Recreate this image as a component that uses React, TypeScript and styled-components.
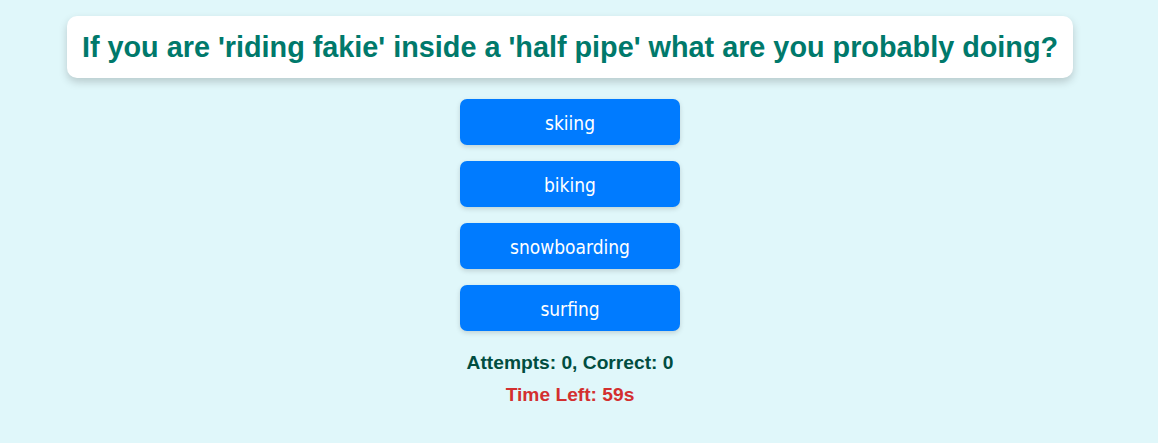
import React from "react";
import styled, { createGlobalStyle } from "styled-components";

const Global = createGlobalStyle`
  html, body {
    margin: 0;
    padding: 0;
    background: #e0f7fa;
  }
  body {
    font-family: "Liberation Sans", Arial, sans-serif;
  }
`;

const Page = styled.div`
  width: 1140px;
  display: flex;
  flex-direction: column;
  align-items: center;
  padding-top: 16px;
`;

const QuestionCard = styled.h2`
  margin: 0;
  background: #ffffff;
  border-radius: 10px;
  box-shadow: 0 4px 8px rgba(0, 0, 0, 0.18);
  padding: 15px 15px;
  color: #00796b;
  font-size: 28.8px;
  font-weight: bold;
  line-height: 32px;
  text-align: center;
  white-space: nowrap;
`;

const Options = styled.div`
  display: flex;
  flex-direction: column;
  gap: 16px;
  margin-top: 21px;
`;

const OptionButton = styled.button`
  width: 220px;
  height: 46px;
  border: none;
  border-radius: 7px;
  background: #007bff;
  color: #ffffff;
  font-family: "DejaVu Sans Condensed", "DejaVu Sans", Verdana, sans-serif;
  font-stretch: condensed;
  font-size: 19px;
  padding: 2px 0 0;
  box-shadow: 0 2px 5px rgba(0, 0, 0, 0.15);
  cursor: pointer;
`;

const Stats = styled.p`
  margin: 21px 0 0;
  color: #004d40;
  font-size: 19.2px;
  font-weight: bold;
  line-height: 22px;
`;

const Timer = styled.p`
  margin: 10px 0 0;
  color: #d32f2f;
  font-size: 19.2px;
  font-weight: bold;
  line-height: 22px;
`;

const answers = ["skiing", "biking", "snowboarding", "surfing"];

export default function App() {
  return (
    <>
      <Global />
      <Page>
        <QuestionCard>
          If you are 'riding fakie' inside a 'half pipe' what are you probably doing?
        </QuestionCard>
        <Options>
          {answers.map((a) => (
            <OptionButton key={a}>{a}</OptionButton>
          ))}
        </Options>
        <Stats>Attempts: 0, Correct: 0</Stats>
        <Timer>Time Left: 59s</Timer>
      </Page>
    </>
  );
}
